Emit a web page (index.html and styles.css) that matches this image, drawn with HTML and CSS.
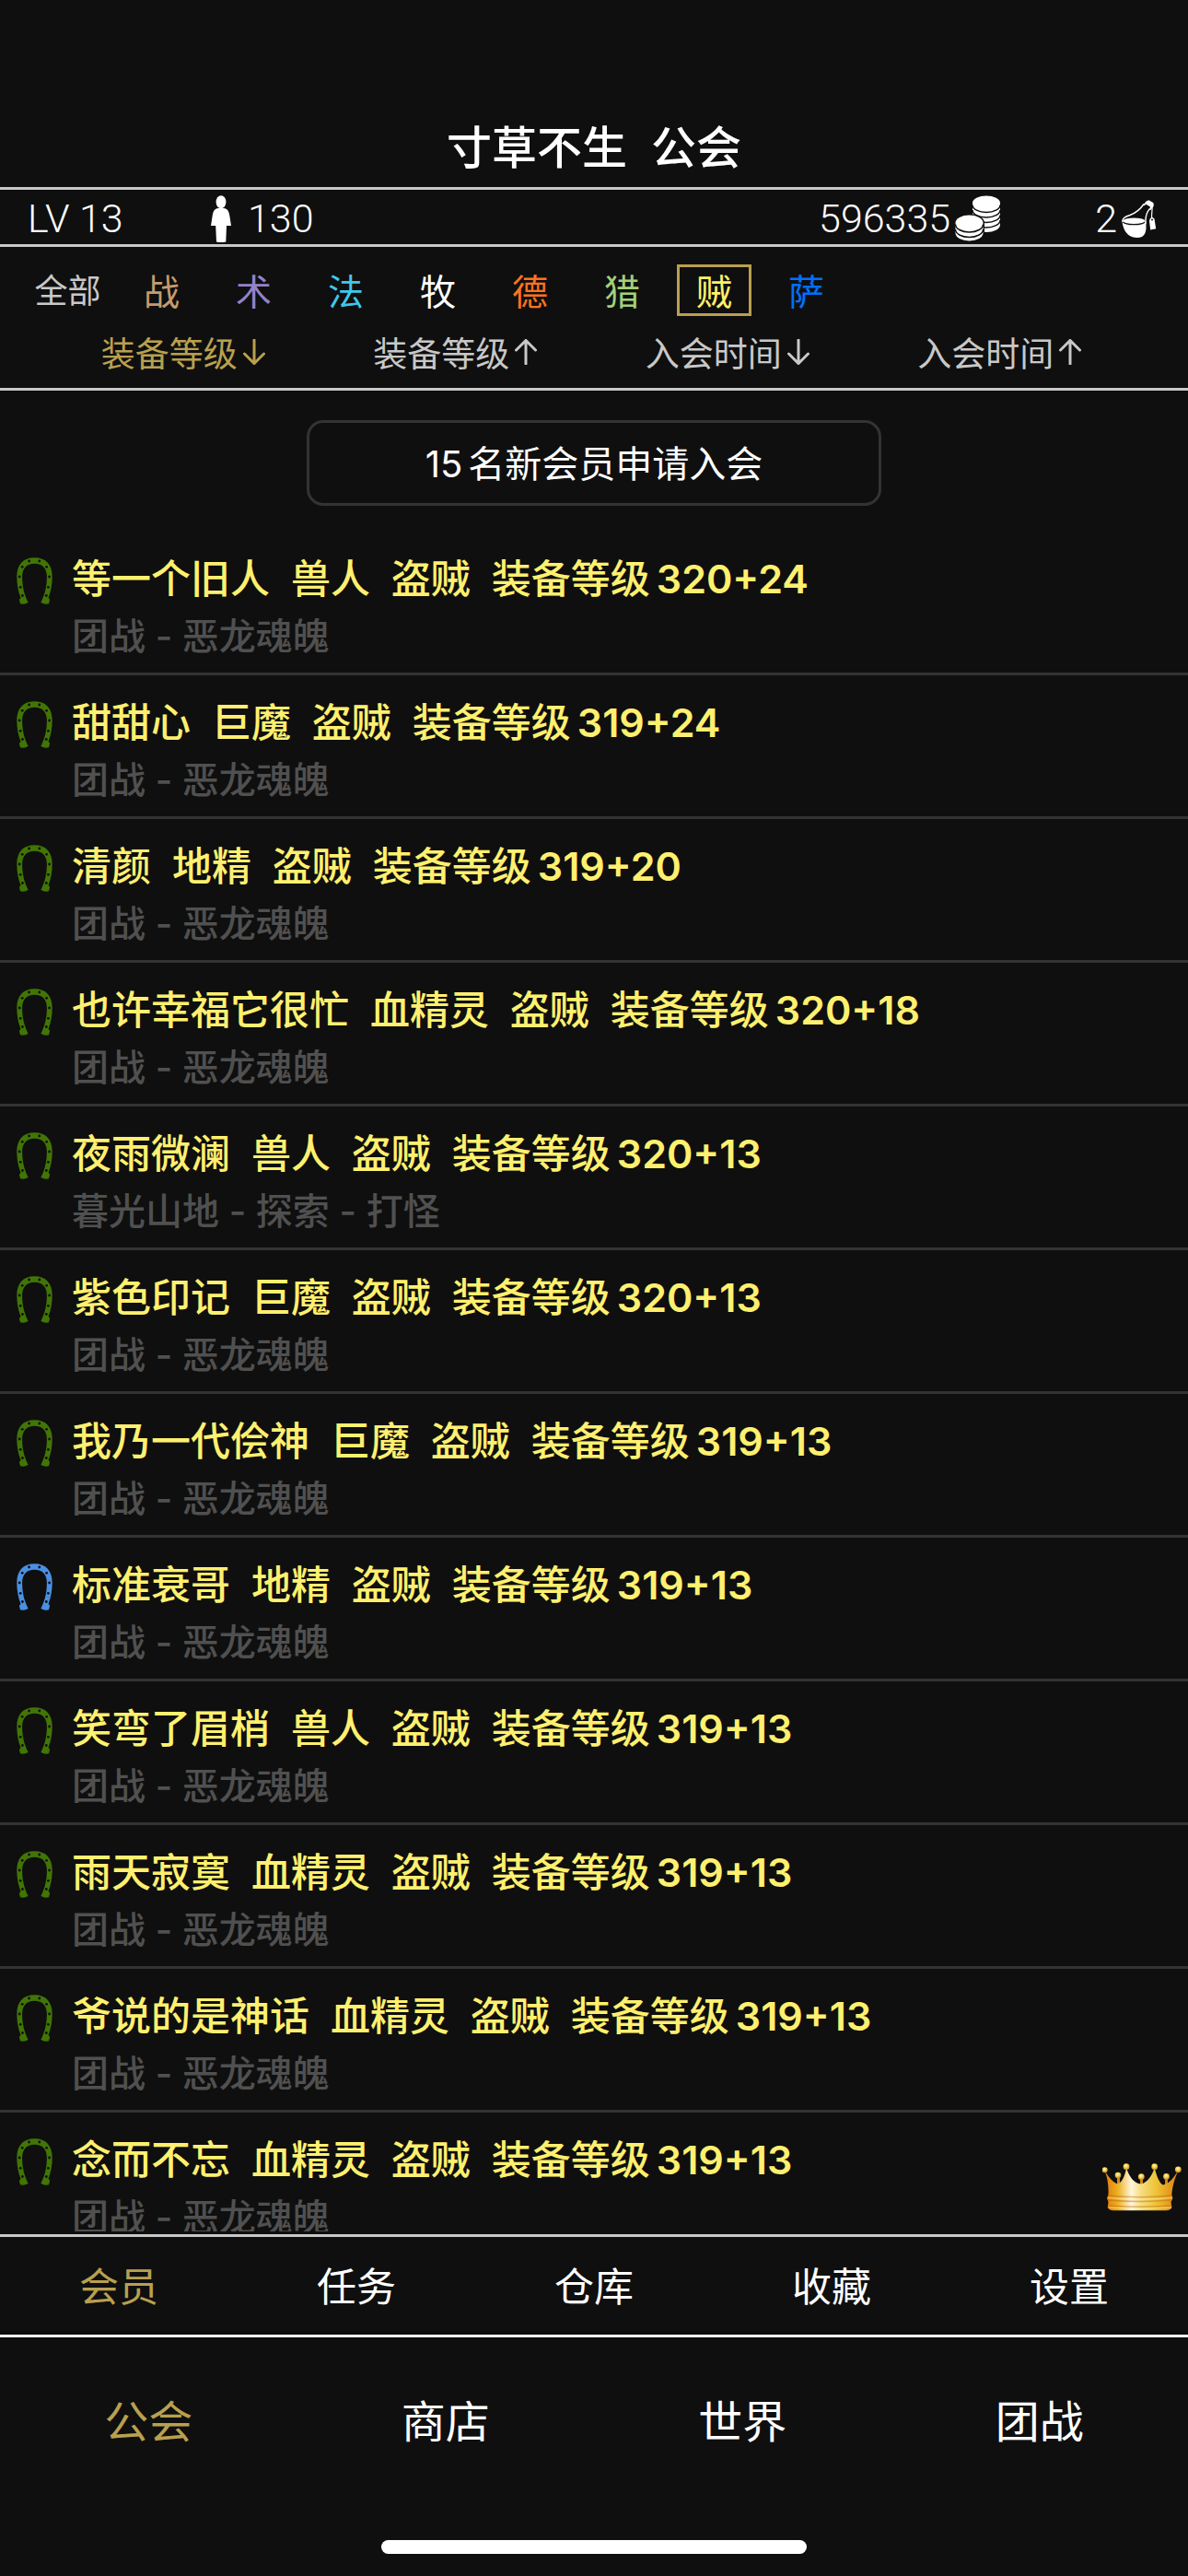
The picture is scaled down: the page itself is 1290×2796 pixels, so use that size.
FILE: index.html
```html
<!DOCTYPE html>
<html lang="zh-CN">
<head>
  <meta charset="UTF-8">
  <meta name="viewport" content="width=device-width, initial-scale=1.0">
  <title>寸草不生 公会</title>
  <link rel="stylesheet" href="styles.css">
</head>
<body>
  <!-- Shared icons -->
  <svg class="sprite" aria-hidden="true">
    <symbol id="horseshoe" viewBox="0 0 39 51">
      <path fill="currentColor" d="M4 50.3L3 46.5C3 45 4 44.5 4.5 44C1.5 36 .3 29 .3 21C.3 8 7 .3 19.5 .3S38.7 8 38.7 21C38.7 29 37.5 36 34.5 44C35.5 44.5 36 45 36 46.5L35 50.3C31 51.5 29 50 26.3 49C30 42 32.9 33 32.9 21C32.9 12 28 6.8 19.5 6.8S6.1 12 6.1 21C6.1 33 9 42 12.7 49C10 50 8 51.5 4 50.3Z"/>
      <g fill="#0f0f0f">
        <circle cx="13.6" cy="4" r="1.4"/><circle cx="24.8" cy="4" r="1.4"/>
        <circle cx="6.2" cy="10.3" r="1.4"/><circle cx="32.6" cy="10.3" r="1.4"/>
        <circle cx="3.2" cy="21" r="1.4"/><circle cx="35.6" cy="21" r="1.4"/>
        <circle cx="4.2" cy="32.3" r="1.4"/><circle cx="34.4" cy="32.3" r="1.4"/>
        <circle cx="6.4" cy="41.5" r="1.4"/><circle cx="32.3" cy="41.5" r="1.4"/>
      </g>
    </symbol>
  </svg>

  <!-- Title -->
  <header class="header">
    <h1>寸草不生  公会</h1>
  </header>

  <!-- Guild stats -->
  <div class="stats">
    <span class="level">LV 13</span>
    <span class="stat people">
      <svg width="22" height="51" viewBox="0 0 22 51" fill="#fff">
        <ellipse cx="11" cy="7.3" rx="5.4" ry="7"/>
        <path d="M8 14H14C18 14.5 19.5 17 20.3 22L22 33H17L16.3 50.5Q11 51.5 6 50.5L5.2 33H0L1.7 22C2.5 17 4 14.5 8 14Z"/>
      </svg>
      130
    </span>
    <span class="stat">596335
      <svg width="50" height="50" viewBox="0 0 50 50">
        <path fill="#fff" d="M19 9V32A15 8 0 0 0 49 32V9Z"/>
        <ellipse cx="34" cy="8.6" rx="15" ry="8.1" fill="#fff"/>
        <path fill="none" stroke="#0f0f0f" stroke-width="1.5" d="M19 10.5A15 8 0 0 0 49 10.5M19 16A15 8 0 0 0 49 16M19 21.5A15 8 0 0 0 49 21.5M19 27A15 8 0 0 0 49 27"/>
        <path fill="#fff" stroke="#0f0f0f" stroke-width="3" paint-order="stroke" d="M.5 30A15 8.5 0 0 1 30.5 30V41A15 8.5 0 0 1 .5 41Z"/>
        <path fill="none" stroke="#0f0f0f" stroke-width="1.5" d="M.5 31.5A15 8.5 0 0 0 30.5 31.5M.5 37A15 8.5 0 0 0 30.5 37"/>
      </svg>
    </span>
    <span class="stat">2
      <svg width="38" height="41" viewBox="0 0 38 41">
        <path fill="#fff" d="M.5 22.5H26.5V31C26 37 23.5 41 17 41C6 41 1 32 .5 22.5Z"/>
        <ellipse cx="13.3" cy="22.8" rx="12.6" ry="3.9" fill="#fff" stroke="#0f0f0f" stroke-width="1.2"/>
        <path fill="none" stroke="#fff" stroke-width="1.4" d="M.8 24C.5 20 3 18.5 9 16.5C17 13.5 21 9 24 4.5M26 26C25.5 19 26.5 14 30.5 9.5"/>
        <path fill="#fff" d="M26.5 1.5L29.5 .2L34.5 3.2L34.8 6.5L31.5 11L30 10.4L31 7.5L26.5 4.7L24.5 6.2L23.6 5.3Z"/>
        <path fill="none" stroke="#fff" stroke-width="1.2" d="M33.2 7L32.4 21"/>
        <path fill="#fff" d="M30.6 20.5L33 18.5L35.5 20.5L37.2 31.3L31.2 32.4L30 23Z"/>
        <circle cx="33" cy="21.6" r="1" fill="#0f0f0f"/>
      </svg>
    </span>
  </div>

  <!-- Class filter and sorting -->
  <div class="filters">
    <div class="classes">
      <button class="all">全部</button>
      <button class="warrior">战</button>
      <button class="warlock">术</button>
      <button class="mage">法</button>
      <button class="priest">牧</button>
      <button class="druid">德</button>
      <button class="hunter">猎</button>
      <button class="rogue selected">贼</button>
      <button class="shaman">萨</button>
    </div>
    <div class="sorting">
      <button class="active">装备等级<svg width="24" height="28" viewBox="0 0 24 28"><path d="M12 1V26M1.5 16L12 26.5L22.5 16"/></svg></button>
      <button>装备等级<svg width="24" height="28" viewBox="0 0 24 28"><path d="M12 27V2M1.5 12L12 1.5L22.5 12"/></svg></button>
      <button>入会时间<svg width="24" height="28" viewBox="0 0 24 28"><path d="M12 1V26M1.5 16L12 26.5L22.5 16"/></svg></button>
      <button>入会时间<svg width="24" height="28" viewBox="0 0 24 28"><path d="M12 27V2M1.5 12L12 1.5L22.5 12"/></svg></button>
    </div>
  </div>

  <!-- Member list -->
  <main class="members">
    <button class="apply"><span class="count">15</span>名新会员申请入会</button>
    <ul>
      <li>
        <svg class="shoe"><use href="#horseshoe"/></svg>
        <div>
          <h2>等一个旧人  兽人  盗贼  装备等级<span>320+24</span></h2>
          <p>团战 - 恶龙魂魄</p>
        </div>
      </li>
      <li>
        <svg class="shoe"><use href="#horseshoe"/></svg>
        <div>
          <h2>甜甜心  巨魔  盗贼  装备等级<span>319+24</span></h2>
          <p>团战 - 恶龙魂魄</p>
        </div>
      </li>
      <li>
        <svg class="shoe"><use href="#horseshoe"/></svg>
        <div>
          <h2>清颜  地精  盗贼  装备等级<span>319+20</span></h2>
          <p>团战 - 恶龙魂魄</p>
        </div>
      </li>
      <li>
        <svg class="shoe"><use href="#horseshoe"/></svg>
        <div>
          <h2>也许幸福它很忙  血精灵  盗贼  装备等级<span>320+18</span></h2>
          <p>团战 - 恶龙魂魄</p>
        </div>
      </li>
      <li>
        <svg class="shoe"><use href="#horseshoe"/></svg>
        <div>
          <h2>夜雨微澜  兽人  盗贼  装备等级<span>320+13</span></h2>
          <p>暮光山地 - 探索 - 打怪</p>
        </div>
      </li>
      <li>
        <svg class="shoe"><use href="#horseshoe"/></svg>
        <div>
          <h2>紫色印记  巨魔  盗贼  装备等级<span>320+13</span></h2>
          <p>团战 - 恶龙魂魄</p>
        </div>
      </li>
      <li>
        <svg class="shoe"><use href="#horseshoe"/></svg>
        <div>
          <h2>我乃一代侩神  巨魔  盗贼  装备等级<span>319+13</span></h2>
          <p>团战 - 恶龙魂魄</p>
        </div>
      </li>
      <li>
        <svg class="shoe blue"><use href="#horseshoe"/></svg>
        <div>
          <h2>标准衰哥  地精  盗贼  装备等级<span>319+13</span></h2>
          <p>团战 - 恶龙魂魄</p>
        </div>
      </li>
      <li>
        <svg class="shoe"><use href="#horseshoe"/></svg>
        <div>
          <h2>笑弯了眉梢  兽人  盗贼  装备等级<span>319+13</span></h2>
          <p>团战 - 恶龙魂魄</p>
        </div>
      </li>
      <li>
        <svg class="shoe"><use href="#horseshoe"/></svg>
        <div>
          <h2>雨天寂寞  血精灵  盗贼  装备等级<span>319+13</span></h2>
          <p>团战 - 恶龙魂魄</p>
        </div>
      </li>
      <li>
        <svg class="shoe"><use href="#horseshoe"/></svg>
        <div>
          <h2>爷说的是神话  血精灵  盗贼  装备等级<span>319+13</span></h2>
          <p>团战 - 恶龙魂魄</p>
        </div>
      </li>
      <li>
        <svg class="shoe"><use href="#horseshoe"/></svg>
        <div>
          <h2>念而不忘  血精灵  盗贼  装备等级<span>319+13</span></h2>
          <p>团战 - 恶龙魂魄</p>
        </div>
      </li>
    </ul>
    <button class="crown" aria-label="会长">
      <svg width="86" height="52" viewBox="0 0 86 52">
        <defs>
          <linearGradient id="gold" x1="0" x2="1" y1="0" y2="0">
            <stop offset="0" stop-color="#e0780f"/>
            <stop offset=".18" stop-color="#eeb020"/>
            <stop offset=".36" stop-color="#fff6dc"/>
            <stop offset=".5" stop-color="#f6dc7c"/>
            <stop offset=".72" stop-color="#ecc030"/>
            <stop offset="1" stop-color="#df7d12"/>
          </linearGradient>
          <radialGradient id="pearl" cx=".45" cy=".35" r=".65">
            <stop offset="0" stop-color="#fffbc8"/>
            <stop offset=".5" stop-color="#f0cf4a"/>
            <stop offset="1" stop-color="#c5841a"/>
          </radialGradient>
        </defs>
        <path stroke="#d28a1c" stroke-width="3" d="M17.5 14V24M42.5 16V24M69.5 16V25"/>
        <path fill="url(#gold)" d="M2.5 8C7 15 11 21 17 22.5C22 20 25 12 26 5C29 14 34 22 42 22.5C49 21 54 13 56.7 5C59 14 62 22 66 23.5C74 22 78 14 82.5 8C78 17 76 27 75.3 34L76.5 38L74.5 42L75.5 48Q74 51 70 51.3H12Q7 51 5.7 48L6.5 42L5 38L6.5 34C7 25 5.5 15 2.5 8Z"/>
        <path fill="none" stroke="#b9680f" stroke-opacity=".45" stroke-width="1.4" d="M6 35Q41 38.5 75 35M6 40Q41 43 75.5 40M6.5 46Q41 48.5 75 46"/>
        <path fill="none" stroke="#fff2b0" stroke-opacity=".6" d="M6 37.5Q41 41 75.5 37.5M7 48Q41 50 74.5 48"/>
        <g fill="url(#pearl)">
          <circle cx="2.7" cy="7.3" r="3"/>
          <circle cx="17" cy="13" r="3.3"/>
          <circle cx="26" cy="3.7" r="3.4"/>
          <circle cx="42.3" cy="14.7" r="3.4"/>
          <circle cx="56.7" cy="3.7" r="3.4"/>
          <circle cx="69.5" cy="14.5" r="3.4"/>
          <circle cx="82.3" cy="6.8" r="3.4"/>
        </g>
      </svg>
    </button>
  </main>

  <!-- Guild menu -->
  <nav class="menu">
    <a href="#members" class="active">会员</a>
    <a href="#tasks">任务</a>
    <a href="#storage">仓库</a>
    <a href="#favorites">收藏</a>
    <a href="#settings">设置</a>
  </nav>

  <!-- Bottom tabs -->
  <nav class="tabs">
    <a href="#guild" class="active">公会</a>
    <a href="#shop">商店</a>
    <a href="#world">世界</a>
    <a href="#raid">团战</a>
  </nav>
  <div class="home-bar"></div>
</body>
</html>
```
FILE: styles.css
```css
* {
  box-sizing: border-box;
}

body {
  margin: 0;
  height: 100vh;
  display: flex;
  flex-direction: column;
  overflow: hidden;
  background-color: #0f0f0f;
  color: #fff;
  font-family: Inter, "Noto Sans CJK SC", sans-serif;
}

h1, h2, p, ul {
  margin: 0;
  padding: 0;
}

button {
  padding: 0;
  border: none;
  background: none;
  color: inherit;
  font-family: inherit;
  cursor: pointer;
}

a {
  color: inherit;
  text-decoration: none;
}

.sprite {
  display: none;
}

/* Title */
.header {
  padding: 131px 20px 12px;
  border-bottom: 3px solid #c8c8c8;
  text-align: center;
}

.header h1 {
  font-size: 49px;
  line-height: 60px;
  font-weight: 500;
  white-space: pre;
}

/* Guild stats */
.stats {
  display: flex;
  align-items: center;
  height: 62px;
  padding: 3px 34px 0 30px;
  border-bottom: 3px solid #c8c8c8;
  font-family: Roboto, sans-serif;
  font-size: 43px;
  font-weight: 300;
}

.level {
  width: 199px;
}

.stat {
  display: flex;
  align-items: center;
}

.stat + .stat {
  margin-left: 102px;
}

.stat svg {
  margin-left: 5px;
}

.people svg {
  margin: 0 18px 0 0;
}

.stat.people + .stat {
  margin-left: auto;
}

/* Class filter and sorting */
.filters {
  padding: 19px 0 15px;
  border-bottom: 3px solid #c8c8c8;
}

.classes {
  display: flex;
  gap: 19px;
  padding-left: 31px;
}

.classes button {
  width: 81px;
  height: 56px;
  padding-top: 3px;
  border: 3px solid transparent;
  font-size: 39px;
  line-height: 47px;
}

.classes .all {
  width: 85px;
  font-size: 36px;
  color: #c8c8c8;
}

.classes .selected {
  border-color: #b9a04f;
}

.warrior { color: #c69b6d; }
.warlock { color: #9482c9; }
.mage { color: #40c7eb; }
.priest { color: #fff; }
.druid { color: #ff7320; }
.hunter { color: #a3d07a; }
.rogue { color: #fff06a; }
.shaman { color: #0070ff; }

.sorting {
  display: grid;
  grid-template-columns: repeat(4, 1fr);
  margin-top: 15px;
  padding: 0 57px 0 51px;
  color: #c8c8c8;
}

.sorting button {
  display: flex;
  align-items: center;
  justify-content: center;
  height: 48px;
  font-size: 37px;
}

.sorting svg {
  margin-left: 6px;
  fill: none;
  stroke: currentColor;
  stroke-width: 3;
  stroke-linecap: round;
}

.active,
.sorting .active {
  color: #b9a04f;
}

/* Member list */
.members {
  flex: 1;
  min-height: 0;
  position: relative;
  overflow: hidden;
  margin-bottom: 3px;
  padding-top: 32px;
}

.apply {
  display: block;
  width: 624px;
  height: 93px;
  margin: 0 auto 28px;
  padding-bottom: 3px;
  border: 3px solid #333;
  border-radius: 18px;
  font-size: 40px;
}

.count {
  margin-right: 6px;
}

.members ul {
  list-style: none;
}

.members li {
  display: flex;
  height: 156px;
  padding: 21px 0 0 18px;
  border-bottom: 3px solid #333;
}

.shoe {
  width: 39px;
  height: 51px;
  margin: 7px 21px 0 0;
  color: #417505;
}

.shoe.blue {
  color: #4a90e2;
}

.members h2 {
  font-size: 43px;
  line-height: 60px;
  font-weight: 500;
  color: #fff06f;
  white-space: pre;
}

.members h2 span {
  margin-left: 7px;
  font-weight: 600;
}

.members p {
  margin-top: 5px;
  font-size: 40px;
  line-height: 56px;
  font-weight: 500;
  color: #505050;
}

.crown {
  position: absolute;
  right: 7px;
  bottom: 22px;
  height: 52px;
}

.crown svg {
  display: block;
}

/* Guild menu */
.menu {
  display: flex;
  border-top: 3px solid #c8c8c8;
  border-bottom: 3px solid #fff;
}

.menu a {
  flex: 1;
  padding-top: 2px;
  font-size: 43px;
  line-height: 104px;
  text-align: center;
}

/* Bottom tabs */
.tabs {
  display: flex;
}

.tabs a {
  flex: 1;
  padding-top: 2px;
  font-size: 48px;
  line-height: 180px;
  text-align: center;
}

.home-bar {
  width: 462px;
  height: 15px;
  margin: 38px auto 24px;
  border-radius: 8px;
  background-color: #fff;
}
```
